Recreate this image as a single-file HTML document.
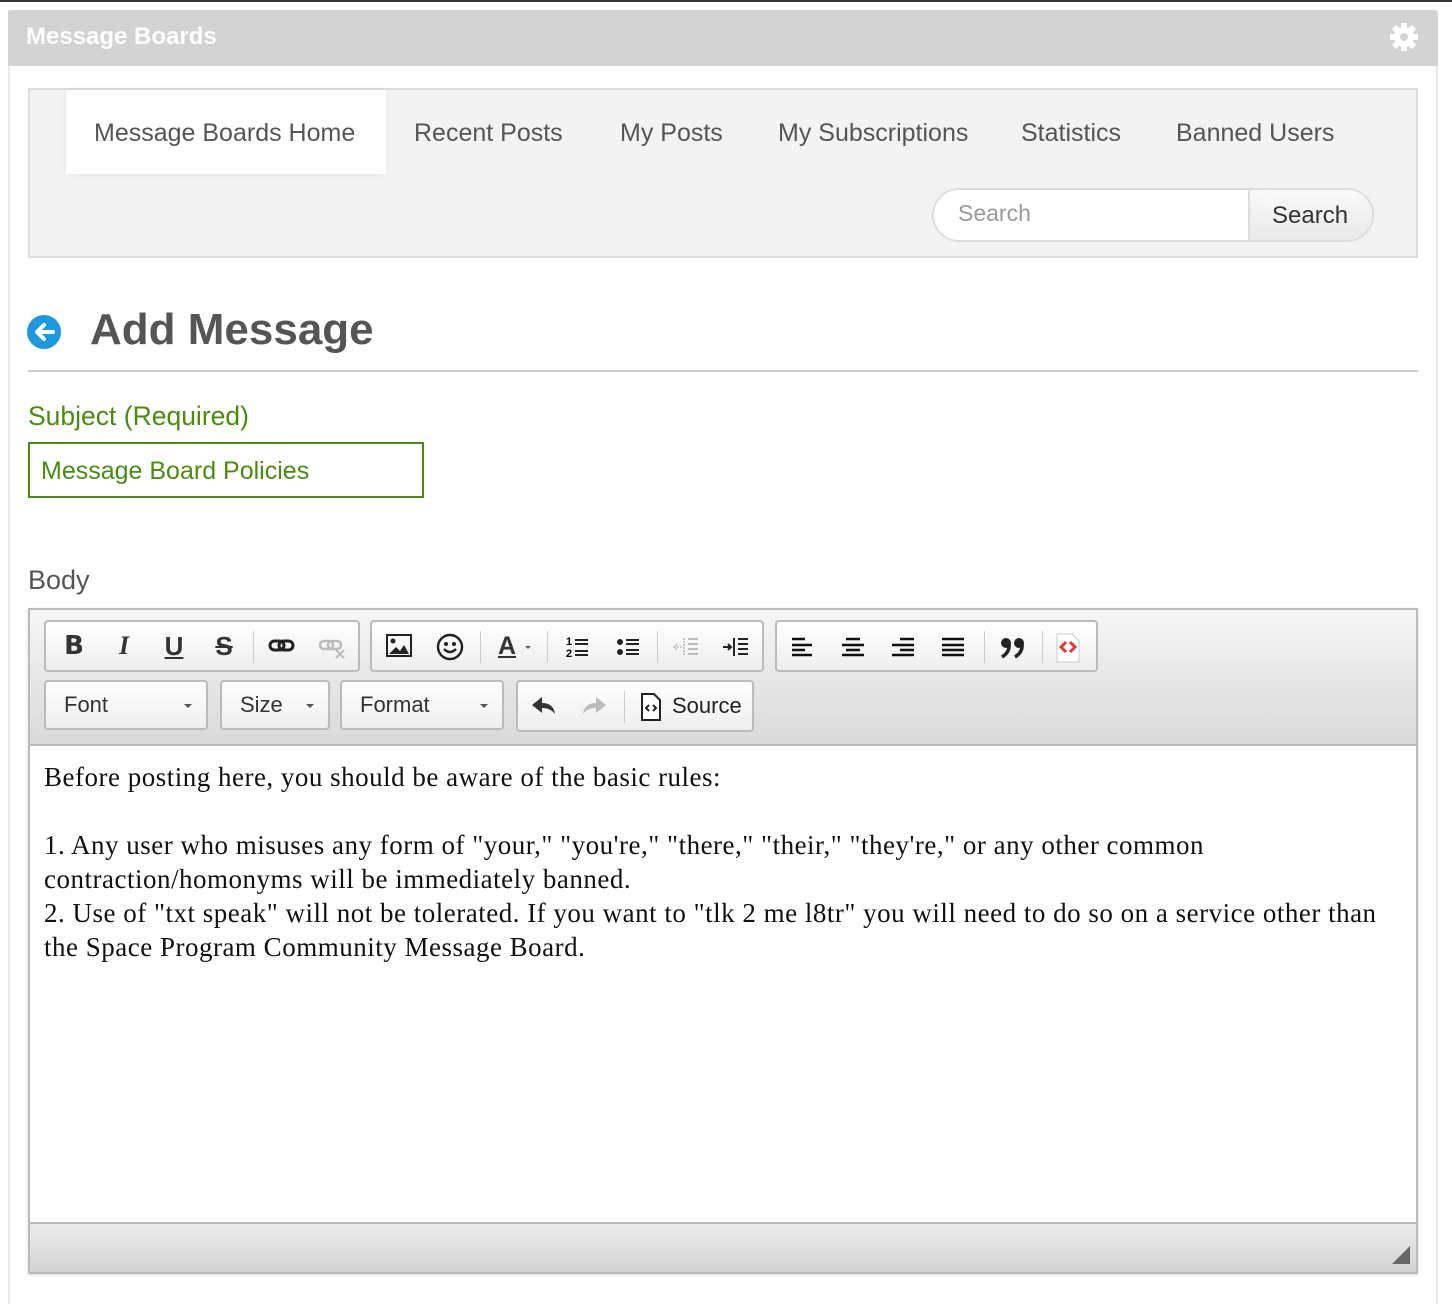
<!DOCTYPE html>
<html><head><meta charset="utf-8"><style>
*{box-sizing:border-box}
body{margin:0;width:1452px;height:1304px;background:#fff;font-family:"Liberation Sans",sans-serif;position:relative;overflow:hidden}
.abs{position:absolute}
.grp{position:absolute;border:2px solid #bbb;border-radius:4px;background:linear-gradient(#fff,#eee);}
.ic{position:absolute;top:0;height:100%;display:flex;align-items:center;justify-content:center;font-weight:bold;font-size:26px;color:#333}
.sep{position:absolute;top:9px;width:1px;height:32px;background:#ccc}
.dd{position:absolute;top:680px;height:50px;border:2px solid #bbb;border-radius:4px;background:linear-gradient(#fff,#eee);font-size:22px;color:#333;padding:10px 0 0 18px}
.dd:after{content:"";position:absolute;right:14px;top:22px;border:4px solid transparent;border-top:4px solid #555;border-bottom:0}
.nav{position:absolute;top:118px;font-size:25px;color:#555}
</style></head><body>
<div class="abs" style="left:0;top:0;width:1452px;height:2px;background:#333"></div>
<div class="abs" style="left:8px;top:10px;width:1430px;height:1294px;border-left:2px solid #e8e8e8;border-right:2px solid #e8e8e8"></div>
<div class="abs" style="left:8px;top:10px;width:1430px;height:56px;background:#d3d3d3;border-radius:4px 4px 0 0"></div>
<div class="abs" style="left:26px;top:23px;font-size:24px;font-weight:bold;color:#fff">Message Boards</div>
<svg class="abs" style="left:1389px;top:22px" width="30" height="30" viewBox="0 0 30 30"><g fill="#fff"><circle cx="15" cy="15" r="10"/><g stroke="#fff" stroke-width="6"><line x1="15" y1="1" x2="15" y2="29"/><line x1="1" y1="15" x2="29" y2="15"/><line x1="5" y1="5" x2="25" y2="25"/><line x1="25" y1="5" x2="5" y2="25"/></g></g><circle cx="15" cy="15" r="4" fill="#d3d3d3"/></svg>

<div class="abs" style="left:28px;top:88px;width:1390px;height:170px;background:#f3f3f3;border:2px solid #ddd"></div>
<div class="abs" style="left:66px;top:90px;width:320px;height:84px;background:#fff;box-shadow:0 0 6px rgba(0,0,0,.06)"></div>
<div class="nav" style="left:94px;top:119px">Message Boards Home</div>
<div class="nav" style="left:414px;top:119px">Recent Posts</div>
<div class="nav" style="left:620px;top:119px">My Posts</div>
<div class="nav" style="left:778px;top:119px">My Subscriptions</div>
<div class="nav" style="left:1021px;top:119px">Statistics</div>
<div class="nav" style="left:1176px;top:119px">Banned Users</div>
<div class="abs" style="left:932px;top:188px;width:442px;height:54px;border:2px solid #ddd;border-radius:27px;background:#fff;overflow:hidden">
<div class="abs" style="left:24px;top:10px;font-size:23px;color:#999">Search</div>
<div class="abs" style="left:314px;top:0;width:130px;height:54px;border-left:2px solid #ddd;background:linear-gradient(#fafafa,#e8e8e8);font-size:24px;color:#333;padding:12px 0 0 22px">Search</div>
</div>

<svg class="abs" style="left:26px;top:314px" width="36" height="36" viewBox="0 0 36 36"><circle cx="18" cy="18" r="17" fill="#1b9ae0"/><path d="M27 18H11M18 11l-7 7 7 7" stroke="#fff" stroke-width="4" fill="none" stroke-linecap="round" stroke-linejoin="round"/></svg>
<div class="abs" style="left:90px;top:305px;font-size:44px;font-weight:bold;color:#555">Add Message</div>
<div class="abs" style="left:28px;top:370px;width:1390px;height:2px;background:#ccc"></div>
<div class="abs" style="left:28px;top:401px;font-size:26.5px;color:#4a8c0f">Subject (Required)</div>
<div class="abs" style="left:28px;top:442px;width:396px;height:56px;border:2px solid #4a8c0f;font-size:25px;color:#4a8c0f;padding:13px 0 0 11px">Message Board Policies</div>
<div class="abs" style="left:28px;top:565px;font-size:27px;color:#555">Body</div>

<div class="abs" style="left:28px;top:608px;width:1390px;height:666px;border:2px solid #bbb;box-shadow:0 1px 3px rgba(0,0,0,.15)"></div>
<div class="abs" style="left:30px;top:610px;width:1386px;height:136px;background:linear-gradient(#f6f6f6,#d9d9d9);border-bottom:2px solid #bbb"></div>
<div class="abs" style="left:30px;top:1222px;width:1386px;height:50px;background:linear-gradient(#ececec,#d3d3d3);border-top:2px solid #bbb"></div>
<div class="abs" style="left:1392px;top:1246px;width:0;height:0;border-left:18px solid transparent;border-bottom:18px solid #666"></div>

<div class="grp" style="left:44px;top:620px;width:316px;height:52px">
<div class="ic" style="left:14px;width:28px;font-family:'DejaVu Sans',sans-serif">B</div>
<div class="ic" style="left:64px;width:28px;font-family:'Liberation Serif',serif;font-style:italic">I</div>
<div class="ic" style="left:114px;width:28px;text-decoration:underline">U</div>
<div class="ic" style="left:164px;width:28px;text-decoration:line-through">S</div>
<div class="sep" style="left:207px"></div>
<svg class="abs" style="left:222px;top:14px" width="28" height="20"><rect x="2" y="5" width="14" height="9" rx="4.5" fill="none" stroke="#222" stroke-width="3"/><rect x="11" y="5" width="14" height="9" rx="4.5" fill="none" stroke="#222" stroke-width="3"/></svg>
<svg class="abs" style="left:272px;top:14px" width="30" height="24"><rect x="2" y="5" width="13" height="8" rx="4" fill="none" stroke="#bbb" stroke-width="2.5"/><rect x="10" y="5" width="13" height="8" rx="4" fill="none" stroke="#bbb" stroke-width="2.5"/><path d="M18 14l8 8M26 14l-8 8" stroke="#bbb" stroke-width="2"/></svg>
</div>
<div class="grp" style="left:370px;top:620px;width:394px;height:52px">
<svg class="abs" style="left:14px;top:12px" width="26" height="24"><rect x="1" y="1" width="24" height="21" fill="none" stroke="#222" stroke-width="2"/><circle cx="7" cy="7" r="2.5" fill="#222"/><path d="M3 20l7-7 4 4 4-6 5 9z" fill="#222"/></svg>
<svg class="abs" style="left:64px;top:11px" width="28" height="28"><circle cx="14" cy="14" r="12" fill="none" stroke="#222" stroke-width="2.4"/><circle cx="10" cy="11" r="2" fill="#222"/><circle cx="18" cy="11" r="2" fill="#222"/><path d="M8 16q6 6 12 0" fill="none" stroke="#222" stroke-width="2.4"/></svg>
<div class="sep" style="left:108px"></div>
<div class="ic" style="left:122px;width:26px;text-decoration:underline;font-size:25px">A</div><div class="abs" style="left:153px;top:24px;border:3px solid transparent;border-top:3px solid #555"></div>
<div class="sep" style="left:175px"></div>
<svg class="abs" style="left:194px;top:13px" width="24" height="24"><text x="0" y="10" font-size="11" font-weight="bold" font-family="Liberation Sans">1</text><text x="0" y="22" font-size="11" font-weight="bold" font-family="Liberation Sans">2</text><path d="M9 5h13M9 9h13M9 16h13M9 20h13" stroke="#222" stroke-width="2"/></svg>
<svg class="abs" style="left:244px;top:13px" width="24" height="24"><circle cx="4" cy="7" r="3" fill="#222"/><circle cx="4" cy="17" r="3" fill="#222"/><path d="M10 5h13M10 9h13M10 15h13M10 19h13" stroke="#222" stroke-width="2"/></svg>
<div class="sep" style="left:285px"></div>
<svg class="abs" style="left:300px;top:13px" width="28" height="24"><path d="M2 12h8M5 9l-3 3 3 3M12 3v18" stroke="#bbb" stroke-width="1.6" fill="none" stroke-dasharray="2 1"/><path d="M16 4h10M16 9h10M16 14h10M16 19h10" stroke="#bbb" stroke-width="2"/></svg>
<svg class="abs" style="left:350px;top:13px" width="28" height="24"><path d="M1 12h8M6 9l3 3-3 3" stroke="#222" stroke-width="2" fill="none"/><path d="M12 3v18" stroke="#222" stroke-width="2"/><path d="M16 4h10M16 9h10M16 14h10M16 19h10" stroke="#222" stroke-width="2"/></svg>
</div>
<div class="grp" style="left:775px;top:620px;width:323px;height:52px">
<svg class="abs" style="left:14px;top:15px" width="24" height="20"><path d="M1 2h13M1 8h20M1 13h13M1 18h20" stroke="#111" stroke-width="2.6"/></svg>
<svg class="abs" style="left:64px;top:15px" width="24" height="20"><path d="M5 2h14M1 8h22M5 13h14M1 18h22" stroke="#111" stroke-width="2.6"/></svg>
<svg class="abs" style="left:114px;top:15px" width="24" height="20"><path d="M9 2h14M1 8h22M9 13h14M1 18h22" stroke="#111" stroke-width="2.6"/></svg>
<svg class="abs" style="left:164px;top:15px" width="24" height="20"><path d="M1 2h22M1 8h22M1 13h22M1 18h22" stroke="#111" stroke-width="2.6"/></svg>
<div class="sep" style="left:207px"></div>
<svg class="abs" style="left:222px;top:14px" width="30" height="24"><circle cx="7" cy="7" r="5" fill="#222"/><path d="M10 8q1 8-7 13" stroke="#222" stroke-width="3.5" fill="none"/><circle cx="20" cy="7" r="5" fill="#222"/><path d="M23 8q1 8-7 13" stroke="#222" stroke-width="3.5" fill="none"/></svg>
<div class="sep" style="left:265px"></div>
<svg class="abs" style="left:278px;top:11px" width="26" height="30"><path d="M2 1h15l7 7v21H2z" fill="#fff" stroke="#ccc"/><path d="M11 9l-5 5 5 5M15 9l5 5-5 5" stroke="#e33" stroke-width="3" fill="none"/></svg>
</div>
<div class="dd" style="left:44px;width:164px">Font</div>
<div class="dd" style="left:220px;width:110px">Size</div>
<div class="dd" style="left:340px;width:164px">Format</div>
<div class="grp" style="left:516px;top:680px;width:238px;height:52px">
<svg class="abs" style="left:12px;top:13px" width="28" height="22"><path d="M12 2L2 10l10 8v-5c6 0 10 2 13 6-1-7-5-11-13-11z" fill="#333"/></svg>
<svg class="abs" style="left:62px;top:13px" width="28" height="22"><path d="M16 2l10 8-10 8v-5c-6 0-10 2-13 6 1-7 5-11 13-11z" fill="#bbb"/></svg>
<div class="sep" style="left:106px"></div>
<svg class="abs" style="left:122px;top:11px" width="22" height="28"><path d="M2 1h12l6 6v20H2z" fill="#fff" stroke="#222" stroke-width="2"/><path d="M9 12l-3 3 3 3M13 12l3 3-3 3" stroke="#222" stroke-width="2" fill="none"/></svg>
<div class="abs" style="left:154px;top:11px;font-size:22px;color:#222">Source</div>
</div>

<div class="abs" style="left:44px;top:760px;width:1360px;font-family:'Liberation Serif',serif;font-size:27px;line-height:34px;color:#111;letter-spacing:0.5px">Before posting here, you should be aware of the basic rules:<br><br>1. Any user who misuses any form of "your," "you're," "there," "their," "they're," or any other common contraction/homonyms will be immediately banned.<br>2. Use of "txt speak" will not be tolerated. If you want to "tlk 2 me l8tr" you will need to do so on a service other than the Space Program Community Message Board.</div>
</body></html>
